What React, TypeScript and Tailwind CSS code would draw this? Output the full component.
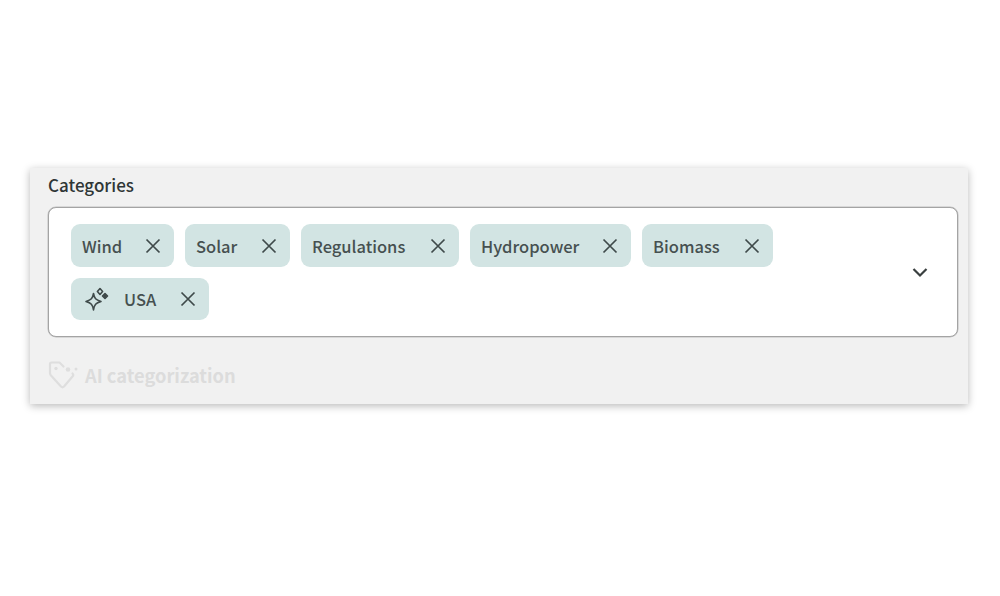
import React from "react";

function Sparkle() {
  return (
    <svg width="24" height="24" viewBox="0 0 24 24" fill="none" stroke="#3f4a4a" strokeWidth="1.6" strokeLinejoin="round" className="shrink-0">
      <path d="M8.5 6.5 C9.3 11.5 10.8 13 16 14.5 C10.8 16 9.3 17.5 8.5 23 C7.7 17.5 6.2 16 1 14.5 C6.2 13 7.7 11.5 8.5 6.5 Z" />
      <path d="M15 1.5 L17.6 4.5 L15 7.5 L12.4 4.5 Z" />
      <path d="M20 6.5 L22.5 9 L20 11.5 L17.5 9 Z" fill="#3f4a4a" />
    </svg>
  );
}

function Close() {
  return (
    <svg width="16" height="16" viewBox="0 0 16 16" fill="none" stroke="#3f4a4a" strokeWidth="1.7" className="shrink-0">
      <path d="M1.5 1.5 L14.5 14.5 M14.5 1.5 L1.5 14.5" />
    </svg>
  );
}

function Chip({ label, width, icon }: { label: string; width: number; icon?: boolean }) {
  return (
    <div
      className={
        "flex items-center rounded-[9px] bg-[#d2e4e3] text-[16.5px] font-medium text-[#465050] " +
        (icon ? "h-[42px] pl-[14px]" : "h-[43px] pl-[11px]")
      }
      style={{ width }}
    >
      {icon && <span className="mr-[15px] flex"><Sparkle /></span>}
      <span className="whitespace-nowrap pt-px">{label}</span>
      <span className="ml-auto mr-[13px] flex"><Close /></span>
    </div>
  );
}

export default function App() {
  return (
    <div className="h-[596px] w-[1000px] overflow-hidden bg-white pl-[30px] pt-[168px] font-['Noto_Sans_CJK_SC','Noto_Sans',sans-serif]">
      <div className="h-[236px] w-[938px] bg-[#f1f1f1] pl-[18px] pr-[10px] pt-[6px] shadow-[0_2px_8px_rgba(0,0,0,0.28)]">
        <div className="h-[33px] text-[17px] font-medium leading-[22px] text-[#2f3636]">Categories</div>
        <div className="flex h-[130px] w-[910px] items-center rounded-[8px] border border-[#a4a4a4] bg-white pl-[22px] pr-[28px] shadow-[0_0_0_0.5px_#c0c0c0]">
          <div className="flex w-[780px] flex-wrap gap-x-[11px] gap-y-[11px]">
            <Chip label="Wind" width={103} />
            <Chip label="Solar" width={105} />
            <Chip label="Regulations" width={158} />
            <Chip label="Hydropower" width={161} />
            <Chip label="Biomass" width={131} />
            <Chip label="USA" width={138} icon />
          </div>
          <svg width="18" height="18" viewBox="0 0 18 18" fill="none" stroke="#3a3f3f" strokeWidth="2.2" className="ml-auto">
            <path d="M2.5 6 L9 12.5 L15.5 6" />
          </svg>
        </div>
        <div className="mt-[22px] flex h-[34px] items-center gap-[6px] text-[#dcdcdc]">
          <svg width="31" height="30" viewBox="0 0 31 30" fill="none" stroke="#dedede" strokeWidth="2.2" strokeLinejoin="round" strokeLinecap="round" className="shrink-0">
            <path d="M15.5 5.5 L11.5 1.5 H3.5 C2.5 1.5 2 2 2 3 V12 C2 13 2.4 13.8 3 14.5 L13 25.5 C14 26.5 15 26.5 16 25.5 L24.5 15.5 C25.5 14.5 25.5 13.5 24.5 12.5" />
            <circle cx="8" cy="7.5" r="1.7" fill="#dedede" stroke="none" />
            <circle cx="20" cy="8.5" r="2.3" fill="#dedede" stroke="none" />
            <circle cx="28" cy="8" r="1.5" fill="#dedede" stroke="none" />
          </svg>
          <span className="text-[18.25px] font-bold">AI categorization</span>
        </div>
      </div>
    </div>
  );
}
